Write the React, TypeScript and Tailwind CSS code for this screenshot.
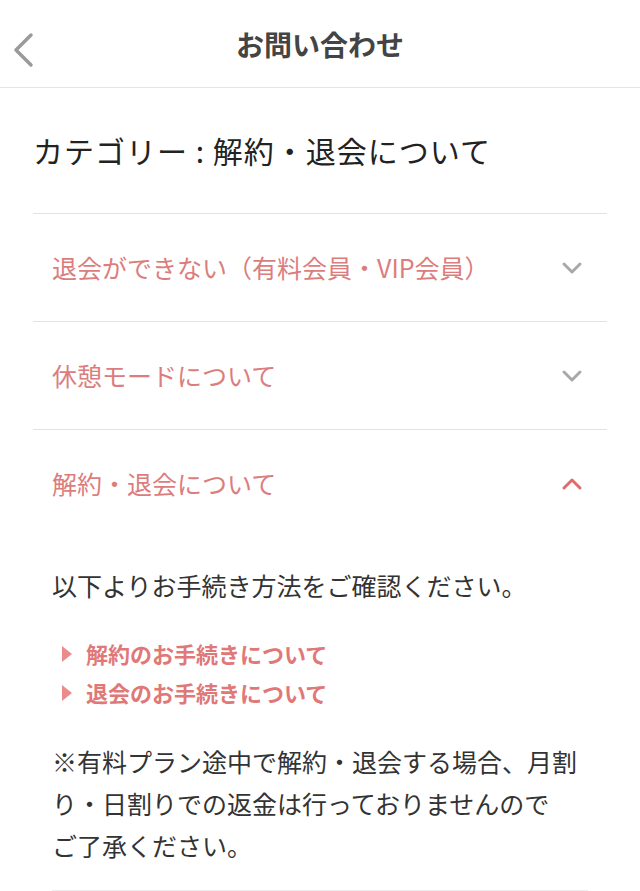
import { useState } from 'react';

const font = { fontFamily: '"Noto Sans CJK JP", "Noto Sans", sans-serif' };

type Faq = { id: string; title: string };

const faqs: Faq[] = [
  { id: 'vip', title: '退会ができない（有料会員・VIP会員）' },
  { id: 'rest', title: '休憩モードについて' },
  { id: 'cancel', title: '解約・退会について' },
];

function Chevron({ open }: { open: boolean }) {
  return (
    <svg width="22" height="14" viewBox="0 0 22 14" className="shrink-0">
      <polyline
        points={open ? '3,11 11,3 19,11' : '3,3 11,11 19,3'}
        fill="none"
        stroke={open ? '#e26a6a' : '#a8a8a8'}
        strokeWidth="3"
        strokeLinecap="round"
        strokeLinejoin="round"
      />
    </svg>
  );
}

function CancelPanel() {
  return (
    <div className="px-[19px] pt-[27px] pb-[24px] text-[25px] text-[#333]">
      <p className="leading-[42px]">以下よりお手続き方法をご確認ください。</p>

      {/* procedure links */}
      <ul className="mt-[28px] flex flex-col">
        {['解約のお手続きについて', '退会のお手続きについて'].map((label) => (
          <li key={label} className="flex items-center h-[39px] pl-[10px]">
            <svg width="10" height="16" viewBox="0 0 10 16" className="mr-[14px]">
              <polygon points="0,0 10,8 0,16" fill="#ea8c8c" />
            </svg>
            <a href="#" className="text-[22px] font-bold text-[#e07878]">
              {label}
            </a>
          </li>
        ))}
      </ul>

      <p className="mt-[28px] leading-[42px]">
        ※有料プラン途中で解約・退会する場合、月割り・日割りでの返金は行っておりませんので
        <br />
        ご了承ください。
      </p>
    </div>
  );
}

export default function App() {
  const [openId, setOpenId] = useState<string>('cancel');

  return (
    <div className="min-h-[891px] bg-white" style={font}>
      <header className="relative flex h-[88px] items-center justify-center border-b border-[#e6e6e6]">
        <button className="absolute left-[8px] top-[28px] p-1" aria-label="戻る">
          <svg width="22" height="36" viewBox="0 0 22 36">
            <polyline
              points="19,3 4,18 19,33"
              fill="none"
              stroke="#9a9a9a"
              strokeWidth="3.5"
              strokeLinecap="round"
              strokeLinejoin="round"
            />
          </svg>
        </button>
        <h1 className="text-[28px] font-bold text-[#444]">お問い合わせ</h1>
      </header>

      <main className="px-[33px]">
        <h2 className="flex h-[125px] items-center text-[30px] tracking-[1px] text-[#222]">
          カテゴリー : 解約・退会について
        </h2>

        <div className="border-t border-[#e3e3e3]">
          {faqs.map((faq) => {
            const open = faq.id === openId;
            return (
              <div key={faq.id} className="border-b border-[#e3e3e3] last:border-b-0">
                <button
                  className="flex h-[107px] w-full items-center justify-between pl-[19px] pr-[24px] text-left"
                  onClick={() => setOpenId(open ? '' : faq.id)}
                >
                  <span className="text-[25px] text-[#dc7d7d]">{faq.title}</span>
                  <Chevron open={open} />
                </button>
                {open && faq.id === 'cancel' && (
                  <div className="mx-[19px] border-b border-[#ececec]">
                    <div className="-mx-[19px]">
                      <CancelPanel />
                    </div>
                  </div>
                )}
              </div>
            );
          })}
        </div>
      </main>
    </div>
  );
}
